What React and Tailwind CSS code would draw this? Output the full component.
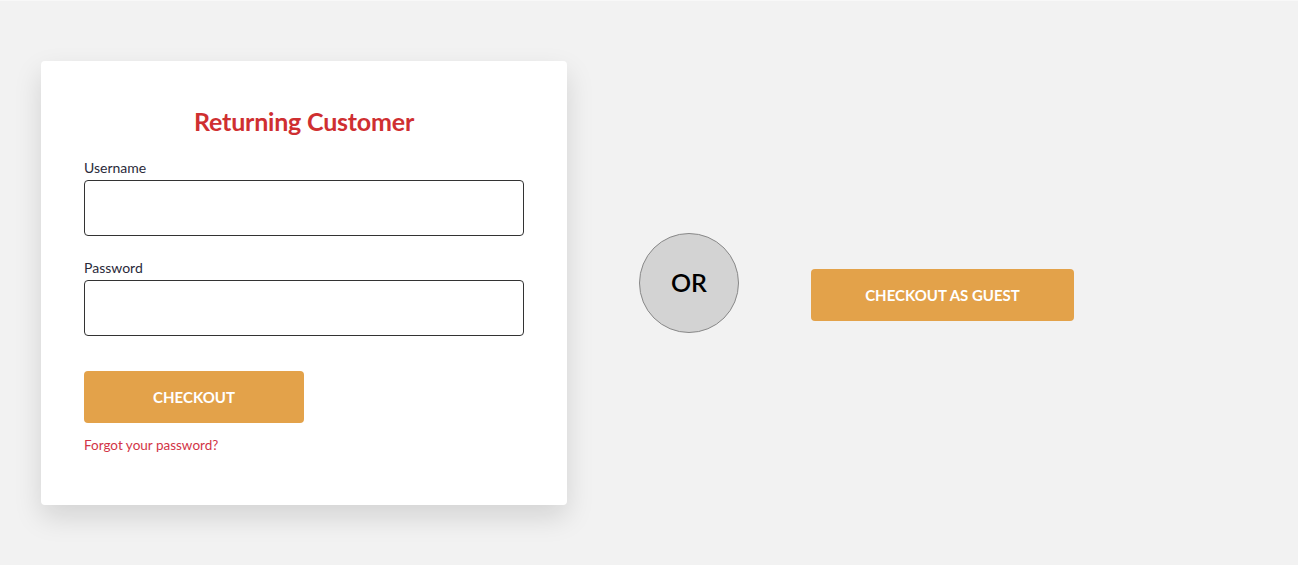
export default function App() {
  return (
    <div className="w-[1298px] h-[565px] bg-[#f2f2f2] border-t border-t-[#f8f8f8] overflow-hidden" style={{ fontFamily: 'Lato, "Noto Sans", sans-serif' }}>
      <div className="flex items-center pl-[41px] pt-[60px]">
        <div className="w-[526px] h-[444px] bg-white rounded-[4px] shadow-[0_12px_28px_rgba(0,0,0,0.13)] px-[43px] pt-[42px]">
          <h2 className="text-center text-[25px] leading-[36px] font-bold text-[#cf2f31] tracking-[-0.2px]">Returning Customer</h2>
          <label className="block mt-[20px] text-[14px] leading-[18px] text-[#2a2a3a]">Username</label>
          <div className="mt-[3px] h-[56px] border border-[#333] rounded-[4px]"></div>
          <label className="block mt-[23px] text-[14px] leading-[18px] text-[#2a2a3a]">Password</label>
          <div className="mt-[3px] h-[56px] border border-[#333] rounded-[4px]"></div>
          <button className="mt-[35px] w-[220px] h-[52px] rounded-[4px] bg-[#e3a24a] text-white text-[15px] font-bold">CHECKOUT</button>
          <div className="mt-[13px] text-[13.5px] leading-[18px] text-[#d23446]">Forgot your password?</div>
        </div>
        <div className="ml-[72px] w-[100px] h-[100px] rounded-full bg-[#d3d3d3] border border-[#888] flex items-center justify-center text-[25px] font-semibold text-black">OR</div>
        <button className="ml-[72px] mt-[24px] w-[263px] h-[52px] rounded-[4px] bg-[#e3a24a] text-white text-[15px] font-bold">CHECKOUT AS GUEST</button>
      </div>
    </div>
  );
}
